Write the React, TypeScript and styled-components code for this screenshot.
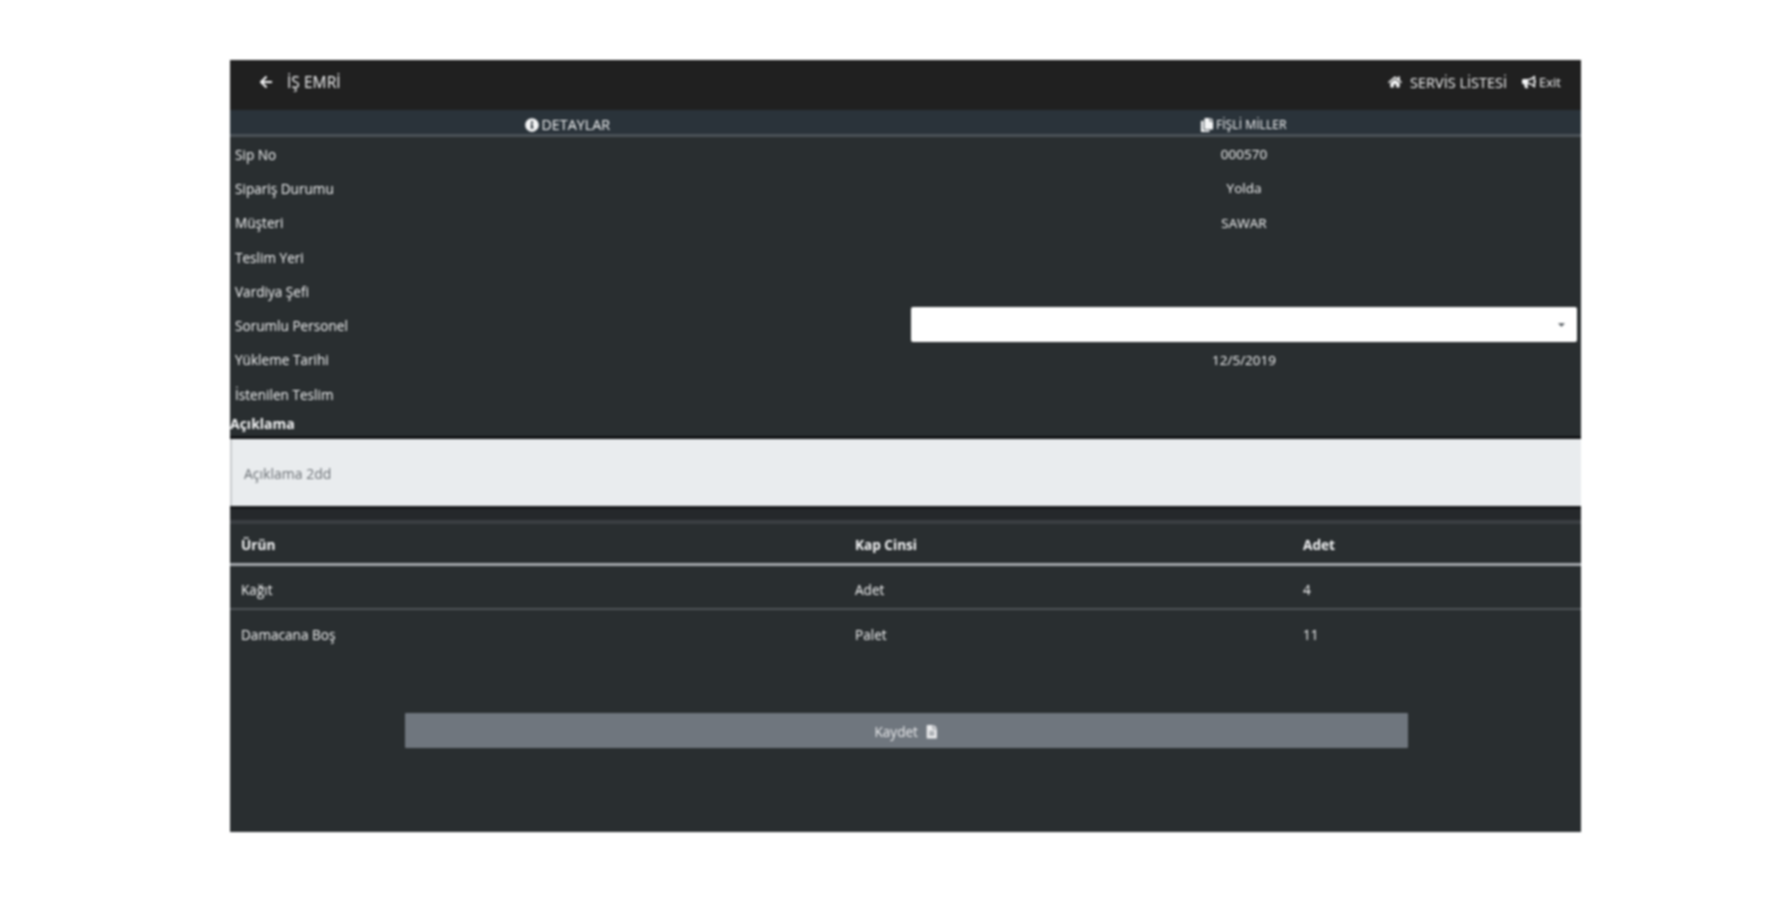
import styled, { createGlobalStyle } from "styled-components";
import { FaArrowLeft, FaHome, FaInfoCircle, FaCopy, FaFileAlt, FaBullhorn, FaCaretDown } from "react-icons/fa";

const GlobalStyle = createGlobalStyle`
  html, body {
    margin: 0;
    background: #ffffff;
  }
`

const Page = styled.div`
  padding: 60px 198px 68px 230px;
  font-family: "Open Sans", sans-serif;
  font-size: 14px;
  color: #f4f5f6;
`

const Panel = styled.div`
  height: 772px;
  background: #292e30;
  display: flex;
  flex-direction: column;
  filter: blur(0.8px);
`

const TopBar = styled.div`
  height: 50px;
  background: #202020;
  display: flex;
  justify-content: space-between;
  align-items: center;
  padding: 0 20px 6px 29px;
  box-sizing: border-box;
`

const NavGroup = styled.div`
  display: flex;
  align-items: center;
  gap: 15px;
`

const NavLink = styled.span<{ $gap: number; $size: number }>`
  display: flex;
  align-items: center;
  gap: ${(p) => p.$gap}px;
  font-size: ${(p) => p.$size}px;
  svg {
    font-size: 14px;
  }
`

const Tabs = styled.div`
  display: grid;
  grid-template-columns: 1fr 1fr;
  height: 27px;
  background: #2a333a;
  border-bottom: 3px solid #4a5157;
  box-sizing: border-box;
`

const Tab = styled.div<{ $size: number }>`
  display: flex;
  justify-content: center;
  align-items: center;
  gap: 2px;
  font-size: ${(p) => p.$size}px;
  padding-top: 5px;
  svg {
    font-size: 14px;
  }
`

const InfoRow = styled.div`
  display: grid;
  grid-template-columns: 676px 1fr;
  grid-template-rows: 100%;
  height: 34.3px;
  align-items: center;
  padding: 0 4px 0 5px;
`

const Label = styled.div`
  font-size: 13.6px;
`

const Value = styled.div`
  text-align: center;
  font-size: 13.5px;
`

const PersonSelect = styled.div`
  height: 35px;
  margin-bottom: 3px;
  background: #ffffff;
  border-radius: 2px;
  display: flex;
  justify-content: flex-end;
  align-items: center;
  padding-right: 10px;
  color: #555b60;
  font-size: 11px;
`

const NoteLabel = styled.div`
  font-weight: 700;
  font-size: 14px;
  height: 28px;
  padding-top: 3px;
  line-height: 20px;
  border-bottom: 3px solid #111315;
  box-sizing: border-box;
`

const NoteBox = styled.div`
  height: 67px;
  background: #e9ecee;
  color: #6b7075;
  display: flex;
  align-items: center;
  padding: 2px 0 0 12px;
  box-sizing: border-box;
  font-size: 14px;
  border-left: 2px solid #c8cbce;
`

const TableTopGap = styled.div`
  height: 18px;
  background: #25282b;
  border-top: 3px solid #16181a;
  border-bottom: 4px solid #3a3e42;
  box-sizing: border-box;
`

const ItemsHead = styled.div`
  display: grid;
  grid-template-columns: 614px 448px 1fr;
  height: 36px;
  padding: 2px 0 1px 11px;
  align-items: center;
  font-size: 13.6px;
  font-weight: 700;
  border-bottom: 3px solid #a2a6aa;
`

const ItemsRow = styled.div<{ $line?: boolean }>`
  display: grid;
  grid-template-columns: 614px 448px 1fr;
  height: 44px;
  align-items: center;
  padding: 4px 0 0 11px;
  box-sizing: border-box;
  font-size: 13.6px;
  border-bottom: ${(p) => (p.$line ? "2px solid #4f5458" : "none")};
`

const ButtonWrap = styled.div`
  padding: 59px 173px 0 175px;
`

const SaveButton = styled.button`
  width: 100%;
  height: 35px;
  border: none;
  border-radius: 1px;
  background: #6f767e;
  color: #e9eaec;
  font-family: inherit;
  font-size: 13.6px;
  display: flex;
  justify-content: center;
  align-items: center;
  gap: 7px;
  padding: 2px 0 0 0;
`

const details = [
  { label: "Sip No", value: "000570" },
  { label: "Sipariş Durumu", value: "Yolda" },
  { label: "Müşteri", value: "SAWAR" },
  { label: "Teslim Yeri", value: "" },
  { label: "Vardiya Şefi", value: "" },
  { label: "Sorumlu Personel", value: "select" },
  { label: "Yükleme Tarihi", value: "12/5/2019" },
  { label: "İstenilen Teslim", value: "" },
]

const items = [
  { name: "Kağıt", unit: "Adet", count: "4" },
  { name: "Damacana Boş", unit: "Palet", count: "11" },
]

const App = () => {
  return (
    <Page>
      <GlobalStyle />
      <Panel>
        <TopBar>
          <NavGroup>
            <NavLink $gap={14} $size={15.6}>
              <FaArrowLeft />
              İŞ EMRİ
            </NavLink>
          </NavGroup>
          <NavGroup>
            <NavLink $gap={8} $size={14.5}>
              <FaHome />
              SERVİS LİSTESİ
            </NavLink>
            <NavLink $gap={3} $size={13}>
              <FaBullhorn />
              Exit
            </NavLink>
          </NavGroup>
        </TopBar>
        <Tabs>
          <Tab $size={14.3}>
            <FaInfoCircle />
            DETAYLAR
          </Tab>
          <Tab $size={12.2}>
            <FaCopy />
            FİŞLİ MİLLER
          </Tab>
        </Tabs>
        <div>
          {details.map((row) => (
            <InfoRow key={row.label}>
              <Label>{row.label}</Label>
              {row.value === "select" ? (
                <PersonSelect>
                  <FaCaretDown />
                </PersonSelect>
              ) : (
                <Value>{row.value}</Value>
              )}
            </InfoRow>
          ))}
        </div>
        <NoteLabel>Açıklama</NoteLabel>
        <NoteBox>Açıklama 2dd</NoteBox>
        <TableTopGap />
        <ItemsHead>
          <span>Ürün</span>
          <span>Kap Cinsi</span>
          <span>Adet</span>
        </ItemsHead>
        {items.map((item, i) => (
          <ItemsRow key={item.name} $line={i === 0}>
            <span>{item.name}</span>
            <span>{item.unit}</span>
            <span>{item.count}</span>
          </ItemsRow>
        ))}
        <ButtonWrap>
          <SaveButton>
            Kaydet
            <FaFileAlt />
          </SaveButton>
        </ButtonWrap>
      </Panel>
    </Page>
  )
}

export default App
